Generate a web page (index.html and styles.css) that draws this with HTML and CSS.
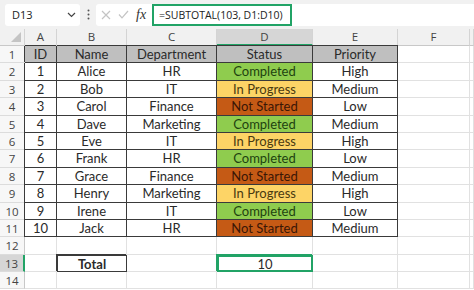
FILE: index.html
```html
<!DOCTYPE html>
<html lang="en">
<head>
    <meta charset="UTF-8">
    <meta name="viewport" content="width=device-width, initial-scale=1.0">
    <title>Task Status - Excel</title>
    <link rel="stylesheet" href="styles.css">
</head>
<body>

    <!-- Formula bar -->
    <div class="formula-bar">
        <div class="name-box">
            <span>D13</span>
            <svg width="9" height="6" viewBox="0 0 9 6"><path d="M1 1 L4.5 4.5 L8 1" fill="none" stroke="#444" stroke-width="1.2"/></svg>
        </div>
        <div class="dots">
            <svg width="3" height="11" viewBox="0 0 3 11"><circle cx="1.5" cy="1.5" r="1" fill="#555"/><circle cx="1.5" cy="5.5" r="1" fill="#555"/><circle cx="1.5" cy="9.5" r="1" fill="#555"/></svg>
        </div>
        <div class="fx-box">
            <svg width="10" height="10" viewBox="0 0 10 10"><path d="M1 1 L9 9 M9 1 L1 9" stroke="#c4c4c4" stroke-width="1.2"/></svg>
            <svg width="11" height="9" viewBox="0 0 11 9"><path d="M1 4.5 L4 7.8 L10 1" fill="none" stroke="#c4c4c4" stroke-width="1.2"/></svg>
            <span class="fx">fx</span>
        </div>
        <div class="formula">
            <div class="formula-text">=SUBTOTAL(103, D1:D10)</div>
        </div>
    </div>

    <!-- Sheet -->
    <div class="sheet">
        <div class="corner"></div>
        <div class="ch">A</div>
        <div class="ch">B</div>
        <div class="ch">C</div>
        <div class="ch selected">D</div>
        <div class="ch">E</div>
        <div class="ch">F</div>
        <div class="ch"></div>

        <div class="rh">1</div>
        <div class="c t head top first">ID</div>
        <div class="c t head top">Name</div>
        <div class="c t head top">Department</div>
        <div class="c t head top">Status</div>
        <div class="c t head top">Priority</div>
        <div class="c"></div><div class="c"></div>

        <div class="rh">2</div>
        <div class="c t first">1</div><div class="c t">Alice</div><div class="c t">HR</div>
        <div class="c t done">Completed</div><div class="c t">High</div>
        <div class="c"></div><div class="c"></div>

        <div class="rh">3</div>
        <div class="c t first">2</div><div class="c t">Bob</div><div class="c t">IT</div>
        <div class="c t progress">In Progress</div><div class="c t">Medium</div>
        <div class="c"></div><div class="c"></div>

        <div class="rh">4</div>
        <div class="c t first">3</div><div class="c t">Carol</div><div class="c t">Finance</div>
        <div class="c t todo">Not Started</div><div class="c t">Low</div>
        <div class="c"></div><div class="c"></div>

        <div class="rh">5</div>
        <div class="c t first">4</div><div class="c t">Dave</div><div class="c t">Marketing</div>
        <div class="c t done">Completed</div><div class="c t">Medium</div>
        <div class="c"></div><div class="c"></div>

        <div class="rh">6</div>
        <div class="c t first">5</div><div class="c t">Eve</div><div class="c t">IT</div>
        <div class="c t progress">In Progress</div><div class="c t">High</div>
        <div class="c"></div><div class="c"></div>

        <div class="rh">7</div>
        <div class="c t first">6</div><div class="c t">Frank</div><div class="c t">HR</div>
        <div class="c t done">Completed</div><div class="c t">Low</div>
        <div class="c"></div><div class="c"></div>

        <div class="rh">8</div>
        <div class="c t first">7</div><div class="c t">Grace</div><div class="c t">Finance</div>
        <div class="c t todo">Not Started</div><div class="c t">Medium</div>
        <div class="c"></div><div class="c"></div>

        <div class="rh">9</div>
        <div class="c t first">8</div><div class="c t">Henry</div><div class="c t">Marketing</div>
        <div class="c t progress">In Progress</div><div class="c t">High</div>
        <div class="c"></div><div class="c"></div>

        <div class="rh">10</div>
        <div class="c t first">9</div><div class="c t">Irene</div><div class="c t">IT</div>
        <div class="c t done">Completed</div><div class="c t">Low</div>
        <div class="c"></div><div class="c"></div>

        <div class="rh">11</div>
        <div class="c t first">10</div><div class="c t">Jack</div><div class="c t">HR</div>
        <div class="c t todo">Not Started</div><div class="c t">Medium</div>
        <div class="c"></div><div class="c"></div>

        <div class="rh">12</div>
        <div class="c"></div><div class="c"></div><div class="c"></div>
        <div class="c"></div><div class="c"></div><div class="c"></div><div class="c"></div>

        <div class="rh selected">13</div>
        <div class="c"></div>
        <div class="c total">Total</div>
        <div class="c"></div>
        <div class="c active">10</div>
        <div class="c"></div><div class="c"></div><div class="c"></div>

        <div class="rh">14</div>
        <div class="c"></div><div class="c"></div><div class="c"></div>
        <div class="c"></div><div class="c"></div><div class="c"></div><div class="c"></div>
    </div>

</body>
</html>
```

FILE: styles.css
```css
* {
    box-sizing: border-box;
}

body {
    margin: 0;
    background-color: #fff;
    font-family: 'Open Sans', sans-serif;
    overflow: hidden;
}

/* Formula bar */
.formula-bar {
    display: flex;
    align-items: center;
    height: 29px;
    padding: 3px 0 3px 5px;
    background-color: #f1f1f1;
}

.name-box {
    display: flex;
    align-items: center;
    justify-content: space-between;
    width: 75px;
    height: 22px;
    padding: 0 4px 0 7px;
    background-color: #fff;
    border-radius: 3px;
    font-size: 11px;
    color: #222;
}

.dots {
    display: flex;
    align-items: center;
    width: 16px;
    justify-content: center;
}

.fx-box {
    display: flex;
    align-items: center;
    gap: 7px;
    width: 56px;
    height: 22px;
    padding-left: 5px;
    background-color: #fff;
    border-radius: 3px 0 0 3px;
}

.fx {
    font-family: 'Liberation Serif', serif;
    font-style: italic;
    font-size: 14px;
    color: #333;
}

.formula {
    flex: 1;
    height: 22px;
    background-color: #fff;
}

.formula-text {
    width: 140px;
    height: 22px;
    border: 2px solid #21a366;
    padding-left: 5px;
    font-size: 10.5px;
    line-height: 18px;
    color: #222;
    white-space: nowrap;
}

/* Sheet grid */
.sheet {
    display: grid;
    grid-template-columns: 25px 32px 70px 90px 96px 85px 72px 1fr;
    grid-template-rows: 17px;
    grid-auto-rows: 17.4px;
}

.corner {
    position: relative;
    background-color: #f1f1f1;
    border-right: 1px solid #d4d4d4;
    border-bottom: 1px solid #c8c8c8;
}

.corner::after {
    content: "";
    position: absolute;
    right: 3px;
    bottom: 3px;
    border-left: 10px solid transparent;
    border-bottom: 10px solid #c4c4c4;
}

.ch {
    background-color: #f1f1f1;
    border-right: 1px solid #d4d4d4;
    border-bottom: 1px solid #c8c8c8;
    text-align: center;
    font-size: 11.5px;
    line-height: 16px;
    color: #444;
}

.ch.selected {
    background-color: #d6d6d6;
    border-bottom: 2px solid #21a366;
}

.rh {
    background-color: #f7f7f7;
    border-right: 1px solid #c8c8c8;
    border-bottom: 1px solid #dcdcdc;
    text-align: center;
    font-size: 11.5px;
    line-height: 17px;
    color: #444;
}

.rh.selected {
    background-color: #d6d6d6;
    border-right: 2px solid #21a366;
}

.c {
    border-right: 1px solid #e1e1e1;
    border-bottom: 1px solid #e1e1e1;
    text-align: center;
    font-family: 'Lato', sans-serif;
    font-size: 13px;
    line-height: 17px;
    color: #2a2a2a;
    white-space: nowrap;
    overflow: hidden;
}

/* Table cells */
.c.t {
    border-right-color: #3a3a3a;
    border-bottom-color: #3a3a3a;
}

.c.t.top {
    box-shadow: 0 -1px 0 #3a3a3a;
}

.c.t.first {
    box-shadow: -1px 0 0 #3a3a3a;
}

.c.t.top.first {
    box-shadow: -1px -1px 0 #3a3a3a;
}

.c.head {
    background-color: #bfbfbf;
}

.c.done {
    background-color: #8fcc4e;
    color: #1e4210;
}

.c.progress {
    background-color: #fdd466;
    color: #4a3a10;
}

.c.todo {
    background-color: #c55a15;
    color: #3a1606;
}

.c.total {
    border: 1px solid #3a3a3a;
    box-shadow: -1px -1px 0 #3a3a3a;
    font-weight: bold;
}

.c.active {
    border: 2px solid #21a366;
    box-shadow: -1px -1px 0 #21a366;
    line-height: 15px;
}
```
